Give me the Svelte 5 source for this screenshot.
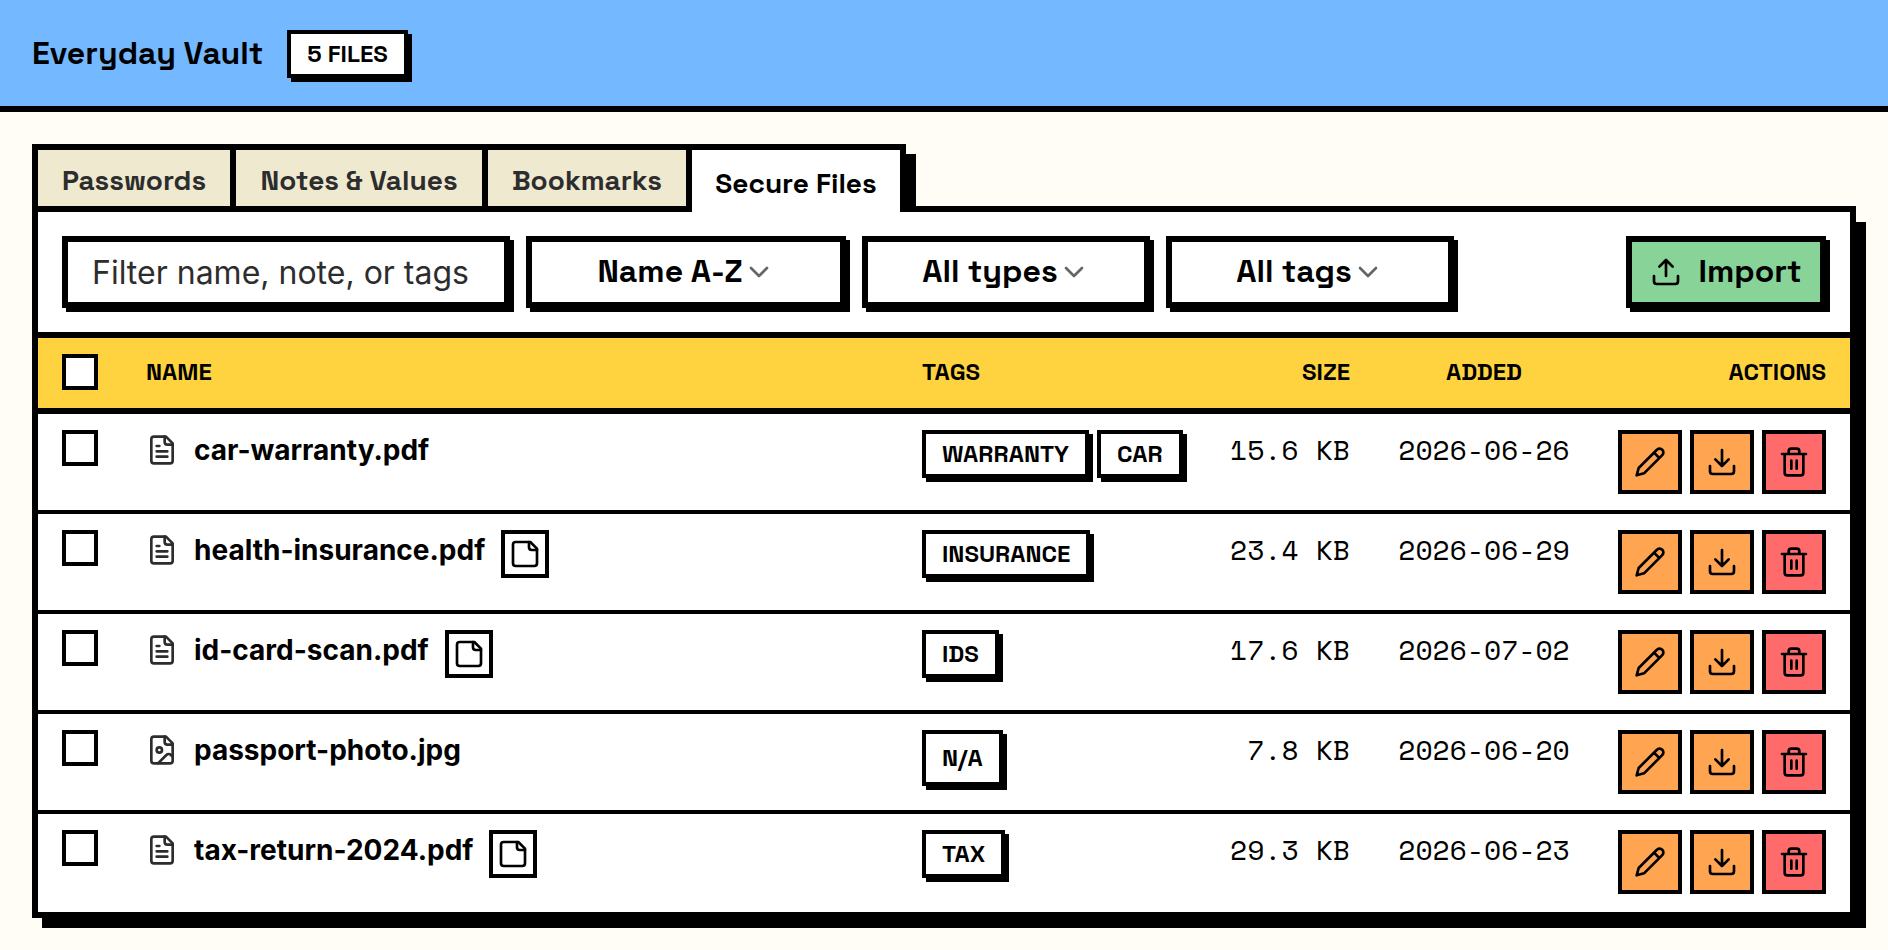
<script lang="ts">
  interface VaultFile {
    name: string;
    kind: 'document' | 'image';
    note: boolean;
    tags: string[];
    size: string;
    added: string;
  }

  const tabs = ['Passwords', 'Notes & Values', 'Bookmarks', 'Secure Files'];

  const files: VaultFile[] = [
    { name: 'car-warranty.pdf', kind: 'document', note: false, tags: ['Warranty', 'Car'], size: '15.6 KB', added: '2026-06-26' },
    { name: 'health-insurance.pdf', kind: 'document', note: true, tags: ['Insurance'], size: '23.4 KB', added: '2026-06-29' },
    { name: 'id-card-scan.pdf', kind: 'document', note: true, tags: ['IDs'], size: '17.6 KB', added: '2026-07-02' },
    { name: 'passport-photo.jpg', kind: 'image', note: false, tags: [], size: '7.8 KB', added: '2026-06-20' },
    { name: 'tax-return-2024.pdf', kind: 'document', note: true, tags: ['Tax'], size: '29.3 KB', added: '2026-06-23' },
  ];

  let activeTab = $state('Secure Files');
  let query = $state('');
  let selected = $state<string[]>([]);

  const allSelected = $derived(selected.length === files.length);

  function toggleAll() {
    selected = allSelected ? [] : files.map((file) => file.name);
  }
</script>

{#snippet picker(label: string, options: string[], wide: boolean)}
  <label class="picker" class:wide>
    <select aria-label={label}>
      {#each options as option}
        <option>{option}</option>
      {/each}
    </select>
    <svg class="chevron" viewBox="0 0 24 24" aria-hidden="true"><path d="M6 9l6 6 6-6" /></svg>
  </label>
{/snippet}

<header class="topbar">
  <h1>Everyday Vault</h1>
  <span class="tag">{files.length} files</span>
</header>

<main>
  <div class="tabs" role="tablist">
    {#each tabs as tab}
      <button
        class="tab"
        class:active={tab === activeTab}
        role="tab"
        aria-selected={tab === activeTab}
        onclick={() => (activeTab = tab)}>{tab}</button>
    {/each}
  </div>

  <section class="panel">
    <div class="toolbar">
      <input class="filter" type="text" placeholder="Filter name, note, or tags" aria-label="Filter files" bind:value={query} />
      {@render picker('Sort by', ['Name A-Z'], true)}
      {@render picker('Type', ['All types'], false)}
      {@render picker('Tag', ['All tags'], false)}
      <button class="import">
        <svg viewBox="0 0 24 24" aria-hidden="true">
          <path d="M21 15v4a2 2 0 0 1-2 2H5a2 2 0 0 1-2-2v-4M17 8l-5-5-5 5M12 3v12" />
        </svg>
        <span>Import</span>
      </button>
    </div>

    <table>
      <thead>
        <tr>
          <th class="col-check">
            <input type="checkbox" aria-label="Select all files" checked={allSelected} onchange={toggleAll} />
          </th>
          <th>Name</th>
          <th class="col-tags">Tags</th>
          <th class="col-size">Size</th>
          <th class="col-added">Added</th>
          <th class="col-actions">Actions</th>
        </tr>
      </thead>
      <tbody>
        {#each files as file (file.name)}
          <tr>
            <td><input type="checkbox" aria-label="Select {file.name}" value={file.name} bind:group={selected} /></td>
            <td>
              <div class="name">
                <svg class="file-icon" viewBox="0 0 24 24" aria-hidden="true">
                  <path d="M15 2H6a2 2 0 0 0-2 2v16a2 2 0 0 0 2 2h12a2 2 0 0 0 2-2V7z" />
                  <path d="M14 2v4a2 2 0 0 0 2 2h4" />
                  {#if file.kind === 'image'}
                    <circle cx="10" cy="12" r="2" />
                    <path d="m20 17-1.296-1.296a2.41 2.41 0 0 0-3.408 0L9 22" />
                  {:else}
                    <path d="M10 9H8M16 13H8M16 17H8" />
                  {/if}
                </svg>
                <span class="file-name">{file.name}</span>
                {#if file.note}
                  <button class="note" aria-label="Show note for {file.name}">
                    <svg viewBox="0 0 24 24" aria-hidden="true">
                      <path d="M16 3H5a2 2 0 0 0-2 2v14a2 2 0 0 0 2 2h14a2 2 0 0 0 2-2V8z" />
                      <path d="M15 3v4a2 2 0 0 0 2 2h4" />
                    </svg>
                  </button>
                {/if}
              </div>
            </td>
            <td>
              <div class="tag-list">
                {#each file.tags as tag}
                  <span class="tag">{tag}</span>
                {:else}
                  <span class="tag empty">N/A</span>
                {/each}
              </div>
            </td>
            <td class="mono size">{file.size}</td>
            <td class="mono added">{file.added}</td>
            <td>
              <div class="actions">
                <button class="action" aria-label="Edit {file.name}">
                  <svg viewBox="0 0 24 24" aria-hidden="true">
                    <path d="M17 3a2.85 2.83 0 1 1 4 4L7.5 20.5 2 22l1.5-5.500ZM15 5l4 4" />
                  </svg>
                </button>
                <button class="action" aria-label="Download {file.name}">
                  <svg viewBox="0 0 24 24" aria-hidden="true">
                    <path d="M21 15v4a2 2 0 0 1-2 2H5a2 2 0 0 1-2-2v-4M7 10l5 5 5-5M12 15V3" />
                  </svg>
                </button>
                <button class="action delete" aria-label="Delete {file.name}">
                  <svg viewBox="0 0 24 24" aria-hidden="true">
                    <path d="M3 6h18M19 6v14a2 2 0 0 1-2 2H7a2 2 0 0 1-2-2V6M8 6V4a2 2 0 0 1 2-2h4a2 2 0 0 1 2 2v2M10 11v6M14 11v6" />
                  </svg>
                </button>
              </div>
            </td>
          </tr>
        {/each}
      </tbody>
    </table>
  </section>
</main>

<style>
  :global(body) {
    --ink: #000;
    --muted: #2d2d2d;
    --display: 'Space Grotesk', Roboto, sans-serif;
    margin: 0;
    background: #fffdf5;
    color: var(--ink);
    font-family: Inter, sans-serif;
  }

  button,
  input,
  select {
    box-sizing: border-box;
    margin: 0;
    border-radius: 0;
    color: inherit;
    font: inherit;
  }

  button,
  select {
    cursor: pointer;
  }

  svg {
    display: block;
    flex: none;
    width: 32px;
    height: 32px;
    fill: none;
    stroke: currentColor;
    stroke-width: 2;
    stroke-linecap: round;
    stroke-linejoin: round;
  }

  .topbar {
    display: flex;
    align-items: flex-start;
    gap: 24px;
    padding: 30px 32px 28px;
    background: #74b9ff;
    border-bottom: 6px solid var(--ink);
  }

  h1 {
    margin: 0;
    font: 700 32px/46px var(--display);
  }

  .tag {
    padding: 0 16px;
    background: #fff;
    border: 4px solid var(--ink);
    box-shadow: 4px 4px 0 var(--ink);
    font: 700 24px/40px var(--display);
    text-transform: uppercase;
    white-space: nowrap;
  }

  .tag.empty {
    padding: 4px 16px;
  }

  main {
    padding: 32px;
  }

  /* The active tab is one border taller, so it opens into the panel below. */
  .tabs {
    display: grid;
    grid-template-columns: 204px 252px 204px 214px;
    grid-template-rows: 62px;
    border-bottom: 6px solid var(--ink);
  }

  .tab {
    padding: 4px 0 0;
    background: #efe9d0;
    border: solid var(--ink);
    border-width: 6px 6px 0 0;
    color: var(--muted);
    font: 700 28px/40px var(--display);
  }

  .tab:first-child {
    border-left-width: 6px;
  }

  .tab.active {
    height: 68px;
    background: #fff;
    box-shadow: 10px 10px 0 var(--ink);
    color: var(--ink);
  }

  .panel {
    position: relative;
    background: #fff;
    border: solid var(--ink);
    border-width: 0 6px 6px;
    box-shadow: 10px 10px 0 var(--ink);
  }

  .toolbar {
    display: flex;
    gap: 16px;
    padding: 24px;
    border-bottom: 6px solid var(--ink);
  }

  .filter,
  .picker,
  .import {
    box-sizing: border-box;
    height: 72px;
    background: #fff;
    border: 6px solid var(--ink);
    box-shadow: 4px 4px 0 var(--ink);
  }

  .filter {
    width: 448px;
    padding: 0 24px;
    font-size: 32px;
  }

  .filter::placeholder {
    color: var(--muted);
    opacity: 1;
  }

  .picker {
    display: flex;
    align-items: center;
    justify-content: center;
    width: 288px;
    font: 700 32px/40px var(--display);
  }

  .picker.wide {
    width: 320px;
  }

  .picker select {
    appearance: none;
    field-sizing: content;
    padding: 0 0 2px;
    background: none;
    border: 0;
  }

  .chevron {
    color: #666;
  }

  .import {
    display: flex;
    align-items: center;
    justify-content: center;
    gap: 16px;
    width: 200px;
    margin-left: auto;
    padding: 0;
    background: #88d498;
    font: 700 32px/40px var(--display);
  }

  .import span {
    padding-bottom: 2px;
  }

  table {
    width: 100%;
    table-layout: fixed;
    border-collapse: separate;
    border-spacing: 0;
  }

  th {
    padding: 16px 24px 18px;
    background: #ffd23f;
    border-bottom: 6px solid var(--ink);
    font: 700 24px/36px var(--display);
    text-align: left;
    text-transform: uppercase;
  }

  td {
    padding: 16px 24px;
    border-bottom: 4px solid var(--ink);
    vertical-align: top;
  }

  tbody tr:last-child td {
    padding-bottom: 18px;
    border-bottom: 0;
  }

  .col-check {
    width: 36px;
  }

  .col-tags {
    width: 260px;
  }

  .col-size {
    width: 120px;
    text-align: right;
  }

  .col-added {
    width: 172px;
    text-align: center;
  }

  .col-actions {
    width: 208px;
    text-align: right;
  }

  input[type='checkbox'] {
    display: block;
    appearance: none;
    width: 36px;
    height: 36px;
    background: #fff;
    border: 4px solid var(--ink);
  }

  input[type='checkbox']:checked {
    background: var(--ink);
  }

  .name {
    display: flex;
    align-items: flex-start;
    gap: 16px;
  }

  .file-icon {
    padding: 4px 0;
    color: var(--muted);
  }

  .file-name {
    font-size: 28px;
    font-weight: 700;
    line-height: 40px;
    white-space: nowrap;
  }

  .note {
    display: grid;
    place-items: center;
    width: 48px;
    height: 48px;
    padding: 0;
    background: #fff;
    border: 4px solid var(--ink);
  }

  .tag-list,
  .actions {
    display: flex;
    align-items: flex-start;
    gap: 8px;
  }

  .mono {
    font: 400 28px/40px 'Space Mono', 'Liberation Mono', monospace;
    white-space: nowrap;
  }

  .size {
    text-align: right;
  }

  .added {
    text-align: center;
  }

  .action {
    display: grid;
    place-items: center;
    width: 64px;
    height: 64px;
    padding: 0;
    background: #ffa552;
    border: 4px solid var(--ink);
  }

  .action.delete {
    background: #ff6b6b;
  }
</style>
